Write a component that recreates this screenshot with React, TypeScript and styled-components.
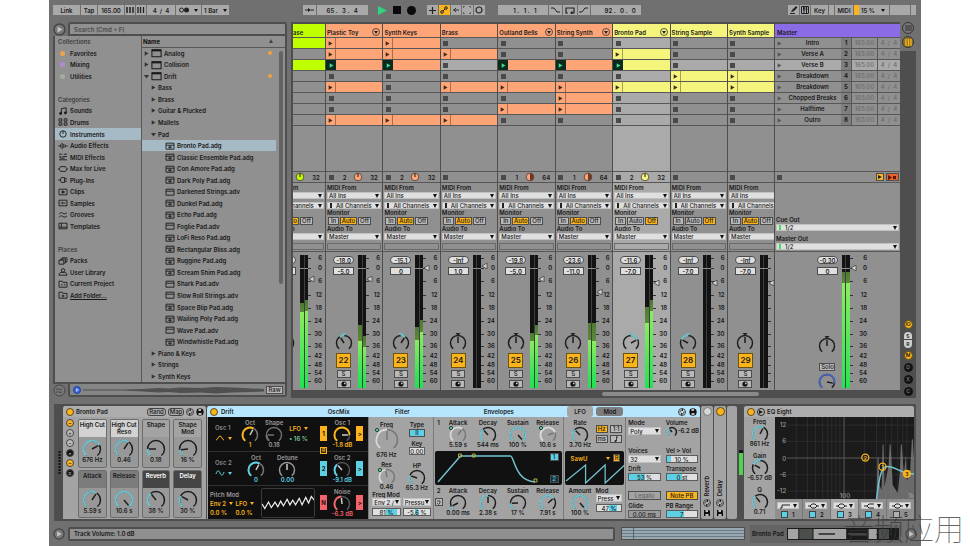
import React from 'react';
import styled, { createGlobalStyle, css } from 'styled-components';

/* ---------- palette ---------- */
const C = {
  chrome: '#6f706f',
  panel: '#909090',
  panelLit: '#aaaaaa',
  device: '#a3a3a3',
  gutter: '#4e4e4e',
  line: '#575757',
  ink: '#191919',
  control: '#a9a9a9',
  field: '#dfdfdf',
  orange: '#fda577',
  yellow: '#f5f57d',
  lime: '#bfff00',
  violet: '#8c6ce6',
  amber: '#fbb41b',
  cyan: '#5cd0e4',
  teal: '#6fc3cf',
  red: '#f4636b',
  sky: '#b5e6fd',
  pick: '#a5bac5',
};

const Global = createGlobalStyle`
  *, *::before, *::after { box-sizing: border-box; }
  body { margin: 0; background: #fff; }
  #root { font: 600 6px/7px Inter, "Liberation Sans", sans-serif; color: ${C.ink}; white-space: nowrap; }
  button, input, select { appearance: none; border: 0; border-radius: 0; margin: 0; padding: 0; min-width: 0;
    background: none; font: inherit; color: inherit; line-height: 7px; }
  button { cursor: pointer; }
  svg { display: block; flex: none; }
  a { color: inherit; }
  ul { list-style: none; margin: 0; padding: 0; }
`;

/* ---------- shell ---------- */
const Page = styled.div`
  position: relative; min-height: 100vh; padding: 0 49px; display: flex; flex-direction: column; overflow: hidden;
`;
const App_ = styled.main`
  flex: 1; min-width: 0; display: flex; flex-direction: column; background: ${C.chrome};
`;
const Watermark = styled.div`
  position: absolute; right: 6px; bottom: 2px; font: 100 30px/34px "Noto Sans CJK SC", sans-serif; color: #3a3a3acc;
`;

/* ---------- shared controls ---------- */
const Caption = styled.span<{ $c?: string; $center?: boolean }>`
  display: block; height: 7px; color: ${p => p.$c || 'inherit'}; text-align: ${p => (p.$center ? 'center' : 'left')};
`;

const SelectWrap = styled.span<{ $dark?: boolean; $h: number; $mark?: string }>`
  position: relative; display: flex; align-items: center; height: ${p => p.$h}px; background: ${C.field};
  box-shadow: inset 0 0 0 1px #0002;
  &::before { content: ''; display: ${p => (p.$mark ? 'block' : 'none')}; width: 2px; height: 5px; margin: 0 2px 0 3px; background: ${p => p.$mark}; }
  &::after { content: ''; position: absolute; right: 2px; top: 2px; border: 2px solid transparent; border-top: 4px solid #111; border-bottom: 0; pointer-events: none; }
  select { flex: 1; width: 100%; height: 100%; padding-left: 2px; font-weight: 500; }
`;
function Select({ label, value, h = 7, mark }: { label: string; value: string; h?: number; mark?: string }) {
  return (
    <SelectWrap $h={h} $mark={mark}>
      <select aria-label={label} defaultValue={value}><option>{value}</option></select>
    </SelectWrap>
  );
}

const ValueField = styled.input<{ $fill?: number; $from?: number; $round?: boolean; $dim?: boolean }>`
  display: block; width: 100%; height: 8px; text-align: center; border: 1px solid #5c5c5c; font-weight: 500; line-height: 6px;
  border-radius: ${p => (p.$round ? 4 : 0)}px;
  background: ${p => p.$dim ? '#9b9b9b' : `linear-gradient(to right, ${C.field} ${p.$from || 0}%, ${C.cyan} ${p.$from || 0}%, ${C.cyan} ${p.$fill || 0}%, ${C.field} ${p.$fill || 0}%)`};
`;

const Toggle = styled.button<{ $on?: boolean; $w?: number; $h?: number; $bg?: string; $c?: string }>`
  flex: none; width: ${p => (p.$w ? p.$w + 'px' : '100%')}; height: ${p => p.$h || 8}px; text-align: center; line-height: ${p => (p.$h || 8) - 2}px;
  border: 1px solid #4d4d4d; background: ${p => p.$bg || (p.$on ? C.amber : '#b9b9b9')}; color: ${p => p.$c || C.ink};
  display: flex; align-items: center; justify-content: center; font-weight: 500;
`;

const RoundBtn = styled.button<{ $s: number; $bg: string; $b?: string; $c?: string }>`
  flex: none; width: ${p => p.$s}px; height: ${p => p.$s}px; border-radius: 50%; background: ${p => p.$bg}; color: ${p => p.$c || C.ink};
  border: 1px solid ${p => p.$b || '#5b4a1c'}; display: flex; align-items: center; justify-content: center; font-size: 5px; line-height: 5px;
`;

/* ---------- dial ---------- */
const DialBox = styled.span`
  position: relative; display: block; flex: none;
  svg { overflow: visible; }
  input { position: absolute; inset: 0; width: 100%; height: 100%; opacity: 0; cursor: ns-resize; }
`;
const pt = (r: number, deg: number) => {
  const a = (deg * Math.PI) / 180;
  return `${(r * Math.sin(a)).toFixed(2)} ${(-r * Math.cos(a)).toFixed(2)}`;
};
const arc = (r: number, a: number, b: number) => `M${pt(r, a)}A${r} ${r} 0 ${b - a > 180 ? 1 : 0} 1 ${pt(r, b)}`;

type DialProps = { label: string; v: number; r?: number; c?: string; ring?: string; hand?: string; center?: boolean; arrow?: string; dot?: boolean };
function Dial({ label, v, r = 8, c = C.teal, ring = '#1d1d1d', hand = '#1d1d1d', center, arrow, dot }: DialProps) {
  const ang = -140 + 280 * v;
  const w = 2 * r + 2;
  const h = 2 * r - 1;
  const from = center ? Math.min(0, ang) : -140;
  const to = center ? Math.max(0, ang) : ang;
  const a = r - 0.5;
  return (
    <DialBox>
      <svg width={w} height={h} viewBox={`${-r - 1} ${-r - 1} ${w} ${h}`} fill="none">
        <path d={arc(a, -140, 140)} stroke={ring} strokeWidth="1.5" />
        {to - from > 1 && <path d={arc(a, from, to)} stroke={c} strokeWidth="1.9" />}
        <path d={`M0 0L${pt(r - 2, ang)}`} stroke={hand} strokeWidth="1.5" />
        {arrow && <path d={`M-2.5 ${-r - 2}h5L0 ${-r + 1}z`} fill={arrow} />}
        {dot && <circle cx={-r + 1} cy={-r + 1} r="1.6" fill="#7fc9a5" stroke="#0d4a38" strokeWidth="1" />}
      </svg>
      <input type="range" aria-label={label} min={0} max={1} step={0.01} defaultValue={v} />
    </DialBox>
  );
}
const StackBox = styled.div<{ $c?: string; $gap?: number }>`
  display: flex; flex-direction: column; align-items: center; min-width: 0;
  > :last-child { color: ${p => p.$c || 'inherit'}; margin-top: ${p => p.$gap || 0}px; }
`;
function DialStack({ label, value, textColor, gap, ...d }: DialProps & { value: string; textColor?: string; gap?: number }) {
  return (
    <StackBox $c={textColor} $gap={gap}>
      <Caption>{label}</Caption>
      <Dial label={label} {...d} />
      <Caption>{value}</Caption>
    </StackBox>
  );
}

/* ---------- icons on a 12 x 10 grid ---------- */
const glyph: Record<string, React.ReactNode> = {
  note: <><path d="M4 8V2l6-1v6" /><circle cx="3" cy="8" r="1.3" fill="currentColor" /><circle cx="9" cy="7.3" r="1.3" fill="currentColor" /></>,
  drums: <><path d="M1 1h3.500v3H1zM7.500 1H11v3H7.500zM1 6h3.500v3H1zM7.500 6H11v3H7.500z" /></>,
  dial: <><circle cx="6" cy="5" r="4" /><path d="M6 5V1" /></>,
  audio: <path d="M0 5h2M3 3v4M5 1v8M7 2.5v5M9 3.5v3M10 5h2" />,
  midi: <path d="M1 1.5h4M7 1.5h4M1 4.500h2M5 4.500h6M1 8.500h10M3 4.500v2h5" />,
  max: <path d="M3 2h6l2 3-2 3H3L1 5zM0 5h1M11 5h1" />,
  plug: <path d="M0 5h3M4 2h4v6H4C2.500 7 2.500 3 4 2zM8 3.500h3M8 6.500h3" />,
  clip: <><path d="M1 1.500h10v7H1z" /><path d="M5 3.500l3 1.500-3 1.500z" fill="currentColor" /></>,
  sample: <><path d="M1 1.500h10v7H1z" /><path d="M3 5h1M5 3.500v3M7 4v2M8 5h1.500" /></>,
  groove: <path d="M1 4c2-3 3-2 5-1s3 1 5-1M1 8c2-3 3-2 5-1s3 1 5-1" />,
  template: <path d="M1 1.500h10v7H1zM4 1.500v5M1 6.500h10" />,
  packs: <path d="M1 4h6v5H1zM3 4V2.500h6V7.500H7M5 2.500V1h6v5H9" />,
  user: <><circle cx="6" cy="3" r="2.200" /><path d="M1 9c0-3 2-3.500 3.500-3.500h3C9 5.500 11 6 11 9z" /></>,
  project: <path d="M1 9V1.500h4l1 1.500h5v6zM3.500 6h2M7 6h2" />,
  folder: <path d="M1 9V1.500h4l1 1.500h5v6zM6 4.500v3.500M4.200 6.200h3.600" />,
  device: <><path d="M1 1.500h10v7.500H1z" /><path d="M1 2.200h10" strokeWidth="2" /></>,
  rack: <><path d="M1 1.500h10v7.500H1zM1 4h10M6 4v5M3.500 6.500h5" /></>,
  preset: <path d="M1 1.500h10v7.500H1zM1 4h10" />,
};
function Icon({ n, w = 10 }: { n: string; w?: number }) {
  return <svg width={w} height={w === 10 ? 8 : 10} viewBox="0 0 12 10" fill="none" stroke="currentColor" strokeWidth="1.1">{glyph[n]}</svg>;
}
const Tri = ({ down, c = '#333' }: { down?: boolean; c?: string }) => (
  <svg width="5" height="5" viewBox="0 0 5 5"><path d={down ? 'M0 1h5L2.500 4.500z' : 'M.7.300L4.500 2.500.7 4.700z'} fill={c} /></svg>
);
const Caret = ({ c = '#111' }: { c?: string }) => <svg width="4" height="3" viewBox="0 0 4 3"><path d="M0 0h4L2 3z" fill={c} /></svg>;
const Swap = () => <svg width="6" height="6" viewBox="0 0 6 6" fill="none" stroke="currentColor" strokeWidth=".9"><path d="M1 3.500C1 2 2 1 3.500 1M5 2.500C5 4 4 5 2.500 5M3 0l1 1-1 1M3 4L2 5l1 1" /></svg>;
const Save = () => <svg width="6" height="6" viewBox="0 0 6 6"><path d="M0 0h5l1 1v5H0z" fill="#111" /><path d="M1.500 0h2.500v2H1.500zM1.500 4h3v2h-3z" fill="#bbb" /></svg>;
const PlayRing = ({ s = 13 }: { s?: number }) => (
  <svg width={s} height={s} viewBox="0 0 13 13"><circle cx="6.500" cy="6.500" r="5.500" fill="#777" stroke="#444" strokeWidth="1.400" /><path d="M4.500 3.500l5 3-5 3z" fill="#c4c4c4" /></svg>
);

/* ---------- toolbar ---------- */
const Bar = styled.header`
  display: flex; align-items: center; height: 22px; padding: 0 5px 2px 4px;
`;
const Group = styled.div<{ $ml?: number }>`display: flex; gap: 1px; align-items: center; margin-left: ${p => p.$ml || 0}px;`;
const Grow = styled.div<{ $n: number }>`flex: ${p => p.$n} 1 0;`;
const Tool = styled.button<{ $w: number; $on?: boolean; $clear?: boolean }>`
  width: ${p => p.$w}px; height: 10px; display: flex; align-items: center; justify-content: center; gap: 5px;
  background: ${p => (p.$clear ? 'none' : p.$on ? C.amber : C.control)};
`;
const Num = styled.input<{ $w: number }>`
  width: ${p => p.$w}px; height: 10px; background: ${C.control}; text-align: center; white-space: pre;
`;
const Cpu = styled.button`
  width: 35px; height: 10px; display: flex; align-items: center; justify-content: space-between; padding: 0 4px 0 7px;
  background: linear-gradient(to right, ${C.amber} 5px, ${C.control} 5px);
`;

function Toolbar() {
  return (
    <Bar>
      <Group>
        <Tool $w={27}>Link</Tool><Tool $w={16}>Tap</Tool><Num $w={26} aria-label="Tempo" defaultValue="165.00" />
        <Tool $w={10} aria-label="Nudge down"><svg width="8" height="6"><path d="M1 0v6M4 0v6M7 0v6" stroke="#222" strokeWidth="1.500" /></svg></Tool>
        <Tool $w={10} aria-label="Nudge up"><svg width="8" height="6"><path d="M1 0v6M3.500 0v6M6.500 0v6" stroke="#222" strokeWidth="1.300" /></svg></Tool>
        <Num $w={28} aria-label="Time signature" defaultValue="4  /  4" />
        <Tool $w={25} aria-label="Metronome"><svg width="10" height="6" viewBox="0 0 10 6"><circle cx="2.500" cy="3" r="2" fill="none" stroke="#222" /><circle cx="7.500" cy="3" r="2.500" fill="#222" /></svg><Caret /></Tool>
        <Tool $w={27}>1 Bar<Caret /></Tool>
      </Group>
      <Grow $n={1} />
      <Group>
        <Tool $w={13} aria-label="Follow"><svg width="9" height="6" viewBox="0 0 9 6"><path d="M0 3h4M6 3h3" stroke="#222" /><path d="M3 1l3 2-3 2z" fill="#222" /></svg></Tool>
        <Num $w={51} aria-label="Position" defaultValue="65 .   3 .   4" />
      </Group>
      <Group $ml={9}>
        <Tool $w={12} $clear aria-label="Play"><svg width="9" height="9" viewBox="0 0 9 9"><path d="M0 0l9 4.500L0 9z" fill="#2fd47c" /></svg></Tool>
        <Tool $w={14} $clear aria-label="Stop"><svg width="8" height="8"><rect width="8" height="8" fill="#0a0a0a" /></svg></Tool>
        <Tool $w={13} $clear aria-label="Record"><svg width="9" height="9"><circle cx="4.500" cy="4.500" r="4.500" fill="#0a0a0a" /></svg></Tool>
      </Group>
      <Group $ml={9}>
        <Tool $w={11} aria-label="Overdub"><svg width="7" height="7"><path d="M3.500 0v7M0 3.500h7" stroke="#222" strokeWidth="1.200" /></svg></Tool>
        <Tool $w={11} $on aria-label="Automation arm"><svg width="8" height="8" viewBox="0 0 8 8" fill="none" stroke="#222"><circle cx="2" cy="6" r="1.300" /><circle cx="6" cy="2" r="1.300" /><path d="M3 5l2-2" /></svg></Tool>
        <Tool $w={10} aria-label="Re-enable automation"><svg width="6" height="6" viewBox="0 0 6 6"><path d="M0 3h6M3 1L1 3l2 2" fill="none" stroke="#333" /></svg></Tool>
        <Tool $w={11} aria-label="Capture"><svg width="8" height="8" viewBox="0 0 8 8"><path d="M0 2V0h2M6 0h2v2M8 6v2H6M2 8H0V6" fill="none" stroke="#333" /></svg></Tool>
        <Tool $w={11} aria-label="Session record"><svg width="8" height="8" viewBox="0 0 8 8"><circle cx="4" cy="4" r="3" fill="none" stroke="#222" strokeWidth="1.200" /></svg></Tool>
      </Group>
      <Group $ml={13}>
        <Num $w={50} aria-label="Loop start" defaultValue="   1 .   1 .   1" />
        <Tool $w={13} aria-label="Punch in"><svg width="9" height="6"><path d="M0 1h3l3 4h3" fill="none" stroke="#222" /></svg></Tool>
        <Tool $w={14} aria-label="Loop"><svg width="10" height="7"><path d="M3 6H1V1h8v5H6M7.500 4.500L6 6l1.500 1.500" fill="none" stroke="#222" strokeWidth="1.200" /></svg></Tool>
        <Tool $w={12} aria-label="Punch out"><svg width="9" height="6"><path d="M0 5h3l3-4h3" fill="none" stroke="#222" /></svg></Tool>
        <Num $w={50} aria-label="Loop length" defaultValue="      92 .   0 .   0" />
      </Group>
      <Grow $n={2} />
      <Group>
        <Tool $w={11} aria-label="Draw mode"><svg width="8" height="8" viewBox="0 0 8 8"><path d="M0 7.500h5" stroke="#222" /><path d="M1 6l1-2 4-4 1.500 1.500-4 4z" fill="#222" /></svg></Tool>
        <Tool $w={10} aria-label="Computer MIDI keyboard"><svg width="8" height="8" viewBox="0 0 8 8"><path d="M.5.500h7v7h-7zM3 1v6M5.500 1v6" fill="none" stroke="#222" /><path d="M2 1h1.500v3.500H2zM4.700 1h1.500v3.500H4.700z" fill="#222" /></svg></Tool>
        <Tool $w={17}>Key</Tool><Tool $w={5} aria-label="Key in" /><Tool $w={18}>MIDI</Tool>
        <Cpu>15 %<Caret /></Cpu>
        <Tool $w={20} aria-label="Disk overload" /><Tool $w={5} aria-label="MIDI out" />
      </Group>
    </Bar>
  );
}

/* ---------- browser ---------- */
const Work = styled.div`flex: 1; min-height: 0; display: flex; padding: 0 5px 0 4px;`;
const Browser = styled.aside`
  width: 234px; flex: none; display: flex; flex-direction: column; padding-bottom: 5px; margin-right: 4px;
`;
const BrowserRow = styled.div`display: flex; align-items: center; gap: 2px;`;
const Search = styled.input`
  flex: 1; height: 14px; padding: 0 4px; background: ${C.panel}; border: 2px solid ${C.gutter}; border-radius: 3px 3px 0 0;
  &::placeholder { color: #4c4c4c; opacity: 1; }
`;
const Shelves = styled.div`
  flex: 1; display: grid; grid-template-columns: 86px minmax(0, 1fr); background: ${C.panel}; border: 2px solid ${C.gutter}; border-top: 0;
`;
const List = styled.ul`
  display: grid; grid-template-rows: repeat(30, minmax(0, 1fr)); min-width: 0;
`;
const Heading = styled.li`padding-left: 3px; display: flex; align-items: center; color: #3d3d3d;`;
const NameHead = styled(Heading)`
  color: #111; font-weight: 700; justify-content: space-between; padding: 0 12px 0 1px; border-bottom: 1px solid ${C.line};
`;
const Item = styled.button<{ $on?: boolean; $pad?: number }>`
  width: 100%; height: 100%; padding-left: ${p => p.$pad ?? 3}px; display: flex; align-items: center; gap: 2px; text-align: left;
  background: ${p => (p.$on ? C.pick : 'none')};
`;
const Folder = styled.a`height: 100%; padding-left: 3px; display: flex; align-items: center; gap: 2px;`;
const Swatch = styled.i<{ $c: string }>`width: 5px; height: 5px; margin: 0 3px 0 2px; border-radius: 50%; background: ${p => p.$c};`;
const Tag = styled.i`width: 4px; height: 4px; border-radius: 50%; background: #f0a43e; margin-left: auto; margin-right: 4px;`;
const Tree = styled.div`
  position: relative; display: grid; min-width: 0; border-left: 1px solid ${C.line};
  li:not(:first-child) { padding-right: 9px; }
`;
const Thumb = styled.i`position: absolute; right: 2px; top: 15px; width: 4px; height: 233px; border-radius: 2px; background: #636363;`;
const Preview = styled.div`
  flex: 1; height: 13px; padding: 0 2px 0 3px; display: flex; align-items: center; gap: 2px; background: #858585;
  border: 2px solid ${C.gutter}; border-top: 0; border-radius: 0 0 3px 3px;
  > svg { flex: 1; min-width: 0; }
`;

const categories: [string, string][] = [
  ['note', 'Sounds'], ['drums', 'Drums'], ['dial', 'Instruments'], ['audio', 'Audio Effects'], ['midi', 'MIDI Effects'], ['max', 'Max for Live'],
  ['plug', 'Plug-Ins'], ['clip', 'Clips'], ['sample', 'Samples'], ['groove', 'Grooves'], ['template', 'Templates'],
];
const presets = ['Bronto Pad.adg', 'Classic Ensemble Pad.adg', 'Con Amore Pad.adg', 'Dark Poly Pad.adg', 'Darkened Strings.adv', 'Dunkel Pad.adg',
  'Echo Pad.adg', 'Foglie Pad.adv', 'LoFi Reso Pad.adg', 'Rectangular Bliss.adg', 'Ruggine Pad.adg', 'Scream Shim Pad.adg', 'Shark Pad.adv',
  'Slow Roll Strings.adv', 'Space Blip Pad.adg', 'Wailing Poly Pad.adg', 'Wave Pad.adv', 'Windwhistle Pad.adg'];

function BrowserPane() {
  const sub = (t: string, open?: boolean) => <li key={t}><Item $pad={9}><Tri down={open} />{t}</Item></li>;
  const top = (t: string, open?: boolean, tag?: boolean) => <li key={t}><Item $pad={2}><Tri down={open} /><Icon n="device" w={11} />{t}{tag && <Tag />}</Item></li>;
  return (
    <Browser>
      <BrowserRow><PlayRing /><Search type="search" aria-label="Search" placeholder="Search (Cmd + F)" /></BrowserRow>
      <Shelves>
        <List>
          <Heading>Collections</Heading>
          <li><Item><Swatch $c="#f0a24d" />Favorites</Item></li>
          <li><Item><Swatch $c="#b48ad8" />Mixing</Item></li>
          <li><Item><Swatch $c="#a3ada0" />Utilities</Item></li>
          <li />
          <Heading>Categories</Heading>
          {categories.map(([i, t]) => <li key={t}><Item $on={t === 'Instruments'}><Icon n={i} />{t}</Item></li>)}
          <li />
          <Heading>Places</Heading>
          <li><Item><Icon n="packs" />Packs</Item></li>
          <li><Item><Icon n="user" />User Library</Item></li>
          <li><Item><Icon n="project" />Current Project</Item></li>
          <li><Folder href="#add"><Icon n="folder" />Add Folder...</Folder></li>
        </List>
        <Tree>
          <List>
            <NameHead>Name<svg width="4" height="4"><path d="M0 4h4L2 0z" fill="#444" /></svg></NameHead>
            {top('Analog', false, true)}{top('Collision')}{top('Drift', true, true)}
            {sub('Bass')}{sub('Brass')}{sub('Guitar & Plucked')}{sub('Mallets')}{sub('Pad', true)}
            {presets.map((t, i) => <li key={t}><Item $pad={23} $on={i === 0}><Icon n={t.endsWith('adv') ? 'preset' : 'rack'} />{t}</Item></li>)}
            {sub('Piano & Keys')}{sub('Strings')}{sub('Synth Keys')}
          </List>
          <Thumb />
        </Tree>
      </Shelves>
      <BrowserRow>
        <svg width="13" height="13" viewBox="0 0 13 13" fill="none" stroke="#444"><circle cx="6.500" cy="6.500" r="5.500" fill="#777" /><path d="M3 5.500c2-2 3 1 6-.500M3 8.500c2-2 3 1 6-.500" /></svg>
        <Preview>
          <RoundBtn $s={8} $bg="#3c63d8" $b="#2244a8" aria-label="Preview"><svg width="4" height="4"><path d="M1 0l3 2-3 2z" fill="#a9c0ff" /></svg></RoundBtn>
          <svg height="8" viewBox="0 0 180 8" preserveAspectRatio="none"><path d="M0 3.500h40l20-.5 15-1 10 .5 12-1 20 .5 15-1 16 .5 20 1 12 .5v2.500l-12 .5-20 .5-16 1-15-1-20 .5-12-1-10 .5-15-1-20-1H0z" fill="#505050" /></svg>
          <Toggle $w={17} $h={8}>Raw</Toggle>
        </Preview>
      </BrowserRow>
    </Browser>
  );
}

/* ---------- session ---------- */
const Session = styled.section`
  flex: 1; min-width: 0; display: flex; flex-direction: column; background: ${C.gutter}; padding-left: 2px; margin-bottom: 4px;
`;
const Tracks = styled.div`
  flex: 1; display: grid; gap: 1px; grid-template-columns: 32px repeat(7, minmax(0, 1fr)) 46px 125px; padding-top: 2px;
`;
const Column = styled.div<{ $lit?: boolean; $end?: boolean }>`
  min-width: 0; overflow: hidden; display: flex; justify-content: ${p => (p.$end ? 'flex-end' : 'flex-start')};
  background: ${p => (p.$lit ? C.panelLit : C.panel)};
`;
const Strip = styled.div<{ $fixed?: boolean }>`
  flex: ${p => (p.$fixed ? '0 0 57px' : '1')}; min-width: 0; display: flex; flex-direction: column;
`;
const TrackTitle = styled.div<{ $c: string; $pad?: number }>`
  height: 14px; padding: 3px 2px 0 ${p => p.$pad || 1}px; display: flex; align-items: center; justify-content: space-between;
  background: ${p => p.$c}; border-bottom: 1px solid ${C.line}; overflow: hidden;
`;
const Slots = styled.div`height: 88px; flex: none; display: grid; grid-template-rows: repeat(8, minmax(0, 1fr));`;
const Slot = styled.div<{ $c?: string; $lit?: boolean }>`
  display: flex; align-items: center; border-bottom: 1px solid ${C.line}; background: ${p => p.$c || (p.$lit ? C.panelLit : 'none')};
`;
const Launch = styled.button<{ $live?: boolean; $split?: boolean }>`
  width: 10px; height: 100%; display: flex; align-items: center; justify-content: center;
  background: ${p => (p.$live ? '#0b2a1e' : 'none')}; border-right: ${p => (p.$split ? '1px solid #0005' : '0')};
`;
const Idle = styled.div`flex: 1; border-bottom: 1px solid ${C.line};`;
const ClipStatus = styled.div`
  height: 11px; display: grid; grid-template-columns: 10px 17px 13px 16px; align-items: center; text-align: center; border-bottom: 1px solid ${C.line};
`;
const StopSquare = () => <svg width="5" height="5"><rect width="5" height="5" fill="#4a4a4a" /></svg>;

const Routing = styled.div`height: 69px; padding: 1px 1px 0 1px; display: flex; flex-direction: column; border-bottom: 1px solid ${C.line};
  > * { flex: none; }
`;
const Pad = styled.div<{ $h: number }>`height: ${p => p.$h}px;`;
const MonitorRow = styled.div`display: flex; gap: 1px; padding-left: 1px;`;
const Blank = styled.div`height: 7px; border: 1px solid #6a6a6a;`;

const Mixer = styled.div<{ $pad?: number }>`height: 138px; flex: none; display: flex; padding-left: ${p => p.$pad || 0}px; position: relative;`;
const Controls = styled.div`width: 32px; flex: none; padding: 4px 0 2px 3px; display: flex; flex-direction: column; align-items: center; gap: 2px;`;
const LevelField = styled.input<{ $round?: boolean }>`
  width: 21px; height: 8px; margin-bottom: 1px; text-align: center; background: ${C.field}; border: 1px solid #4c4c4c; border-radius: ${p => (p.$round ? 4 : 0)}px; line-height: 6px;
`;
const TrackNo = styled.button`width: 15px; height: 15px; background: ${C.amber}; border: 1px solid #6b5312; font-size: 8px; line-height: 13px; font-weight: 600;`;
const Meter = styled.div`
  position: relative; width: 8px; flex: none; margin: 3px 0 2px; display: flex; gap: 1px; background: #3f3f3f;
  input { position: absolute; inset: 0; width: 100%; height: 100%; opacity: 0; writing-mode: vertical-lr; direction: rtl; }
  &::after { content: ''; position: absolute; left: 0; right: 0; top: 13px; height: 1px; background: #8c8c8c; }
`;
const Led = styled.i<{ $g: number; $d: number }>`
  flex: 1; background: linear-gradient(to top, #1fe351 0, #35e456 10%, #8bec5f ${p => p.$g}%, #5a8a38 ${p => p.$g}%, #4e7a33 ${p => p.$d}%, #131313 ${p => p.$d}%);
  ${p => p.$g === 0 && css`background: #131313;`}
`;
const Scale = styled.div<{ $wide?: boolean }>`width: ${p => (p.$wide ? 17 : 14)}px;`;
const Mark = styled.div<{ $h: number }>`
  height: ${p => p.$h}px; display: flex; justify-content: space-between; align-items: flex-end; line-height: 8px;
  &::before { content: ''; width: 3px; height: 1px; margin-bottom: 3px; background: #333; }
`;
const FaderKnob = styled.svg<{ $y: number; $x: number }>`position: absolute; left: ${p => p.$x}px; top: ${p => p.$y}px;`;
const marks: [string, number][] = [['6', 10], ['0', 10], ['6', 13], ['12', 14], ['18', 13], ['24', 13], ['30', 13], ['36', 12], ['42', 10], ['48', 9], ['54', 8], ['60', 8]];

type Levels = [number, number, number, number];
function MeterAndScale({ lv, y, wide }: { lv: Levels; y: number; wide?: boolean }) {
  return (
    <>
      <Meter><Led $g={lv[0]} $d={lv[1]} /><Led $g={lv[2]} $d={lv[3]} /><input type="range" aria-label="Volume fader" /></Meter>
      <Scale $wide={wide}>{marks.map(([t, h], i) => <Mark key={i} $h={h}>{t}</Mark>)}</Scale>
      <FaderKnob $x={wide ? 76 : 41} $y={y - 3} width="6" height="6" viewBox="0 0 6 6"><path d="M0 3l5-3v6z" fill="#d4d4d4" stroke="#333" strokeWidth=".7" /></FaderKnob>
    </>
  );
}

type Track = {
  name: string; c: string; slots: string; menu?: boolean; bars?: [string, string]; pie?: number; mon: 'Auto' | 'Off';
  peak: string; vol: string; no: string; pan: number; lv: Levels; y: number; lit?: boolean; side?: 'l' | 'r';
};
/* slots: "c" holds a clip, "p" is playing, "-" is empty */
const tracks: Track[] = [
  { name: 'ase', c: C.lime, slots: 'c-p-----', bars: ['1', '32'], pie: 0, mon: 'Auto', peak: '-12.0', vol: '-5.0', no: '21', pan: 0.5, lv: [57, 64, 58, 66], y: 27, side: 'l' },
  { name: 'Plastic Toy', c: C.orange, slots: 'ccp-c--c', menu: true, bars: ['2', '32'], pie: 0, mon: 'Auto', peak: '-18.0', vol: '-5.0', no: '22', pan: 0.38, lv: [35, 47, 31, 39], y: 27 },
  { name: 'Synth Keys', c: C.orange, slots: 'ccp----c', bars: ['2', '32'], pie: 0, mon: 'Auto', peak: '-15.1', vol: '0', no: '23', pan: 0.62, lv: [36, 46, 42, 51], y: 16 },
  { name: 'Brass', c: C.orange, slots: '-c--c--c', mon: 'Auto', peak: '-Inf', vol: '1.0', no: '24', pan: 0.5, lv: [0, 0, 0, 0], y: 14 },
  { name: 'Outland Bells', c: C.orange, slots: '--p-c-c-', menu: true, bars: ['1', '64'], pie: 0.5, mon: 'Auto', peak: '-19.8', vol: '-5.0', no: '25', pan: 0.5, lv: [35, 41, 40, 47], y: 27 },
  { name: 'String Synth', c: C.orange, slots: '--p-ccc-', menu: true, bars: ['1', '64'], pie: 0.5, mon: 'Auto', peak: '-23.6', vol: '-11.0', no: '26', pan: 0.5, lv: [36, 49, 35, 49], y: 40 },
  { name: 'Bronto Pad', c: C.yellow, slots: '-cp-c---', menu: true, bars: ['2', '32'], pie: 0, mon: 'Off', peak: '-11.6', vol: '-7.0', no: '27', pan: 0.72, lv: [49, 61, 58, 66], y: 31, lit: true },
  { name: 'String Sample', c: C.yellow, slots: '---cc---', mon: 'Off', peak: '-Inf', vol: '-7.0', no: '28', pan: 0.28, lv: [0, 0, 0, 0], y: 31 },
  { name: 'Synth Sample', c: C.yellow, slots: '---cc---', mon: 'Auto', peak: '-Inf', vol: '-7.0', no: '29', pan: 0.5, lv: [0, 0, 0, 0], y: 31, side: 'r' },
];

function TrackColumn({ t }: { t: Track }) {
  const dark = t.pie === 0.5;
  return (
    <Column $lit={t.lit} $end={t.side === 'l'}>
      <Strip $fixed={!!t.side}>
        <TrackTitle $c={t.c} $pad={t.side === 'l' ? 25 : 1}>
          {t.name}
          {t.menu && <svg width="8" height="8" viewBox="0 0 8 8"><circle cx="4" cy="4" r="3.500" fill="none" stroke="#333" strokeWidth=".8" /><path d="M2 3h4L4 6z" fill="#222" /></svg>}
        </TrackTitle>
        <Slots>
          {t.slots.split('').map((s, i) => (
            <Slot key={i} $c={s === '-' ? undefined : t.c} $lit={i === 2}>
              <Launch $live={s === 'p'} $split={s === 'c'} aria-label={s === '-' ? 'Stop track' : 'Launch clip'}>
                {s === '-' ? <StopSquare /> : <Tri c={s === 'p' ? '#3fdc94' : '#3b2a1c'} />}
              </Launch>
            </Slot>
          ))}
        </Slots>
        <Idle />
        <ClipStatus>
          <Launch aria-label="Stop clips"><StopSquare /></Launch>
          {t.bars && <>
            <span>{t.bars[0]}</span>
            <svg width="10" height="10" viewBox="-5 -5 10 10"><circle r="3.800" fill={t.c} stroke="#4b3b33" strokeWidth=".8" />{dark ? <path d="M0-3.800a3.800 3.800 0 010 7.600z" fill="#6d3a28" /> : <path d="M0 0v-3.800" stroke="#333" strokeWidth="1.200" />}</svg>
            <span>{t.bars[1]}</span>
          </>}
        </ClipStatus>
        <Routing>
          <Caption>MIDI From</Caption><Pad $h={1} />
          <Select label="MIDI input" value="All Ins" /><Pad $h={3} />
          <Select label="MIDI channel" value="All Channels" mark="#222" />
          <Caption>Monitor</Caption><Pad $h={1} />
          <MonitorRow>
            <Toggle $w={11} $h={8}>In</Toggle><Toggle $w={17} $h={8} $on={t.mon === 'Auto'}>Auto</Toggle><Toggle $w={13} $h={8} $on={t.mon === 'Off'}>Off</Toggle>
          </MonitorRow>
          <Caption>Audio To</Caption><Pad $h={1} />
          <Select label="Audio output" value="Master" /><Pad $h={3} />
          <Blank />
        </Routing>
        <Mixer>
          <Controls>
            <LevelField $round readOnly aria-label="Peak" defaultValue={t.peak} />
            <LevelField aria-label="Volume" defaultValue={t.vol} />
            <Grow $n={1} />
            <Dial label="Pan" v={t.pan} center c={C.teal} arrow={t.pan === 0.5 ? '#222' : '#6fb6c6'} />
            <Pad $h={0} />
            <TrackNo>{t.no}</TrackNo>
            <Toggle $w={14} $h={8}>S</Toggle>
            <Toggle $w={14} $h={8} aria-label="Arm"><svg width="6" height="6" viewBox="0 0 6 6"><circle cx="3" cy="3" r="2.600" fill="#111" /><circle cx="3.800" cy="2.400" r=".9" fill="#ccc" /></svg></Toggle>
          </Controls>
          <MeterAndScale lv={t.lv} y={t.y} />
        </Mixer>
      </Strip>
    </Column>
  );
}

const Scene = styled.div<{ $lit?: boolean }>`
  display: grid; grid-template-columns: 9px minmax(0, 1fr) 10px 26px 23px; align-items: center; text-align: center;
  border-bottom: 1px solid ${C.line}; background: ${p => (p.$lit ? C.panelLit : 'none')};
  > * { height: 100%; line-height: 10px; }
`;
const SceneNo = styled.span`background: #7e7e7e; font-weight: 700;`;
const Faint = styled.span`color: #6c6c6c; border-left: 1px solid ${C.line}; font-weight: 500; white-space: pre;`;
const scenes = ['Intro', 'Verse A', 'Verse B', 'Breakdown', 'Breakdown', 'Chopped Breaks', 'Halftime', 'Outro'];
const MasterStatus = styled.div`height: 11px; display: flex; align-items: center; gap: 2px; padding: 0 1px 0 0; border-bottom: 1px solid ${C.line};`;

function MasterColumn() {
  return (
    <Column>
      <Strip>
        <TrackTitle $c={C.violet} $pad={2}>Master</TrackTitle>
        <Slots>
          {scenes.map((s, i) => (
            <Scene key={i} $lit={i === 2}>
              <Launch aria-label="Launch scene"><Tri c="#555" /></Launch>
              <span>{s}</span><SceneNo>{i + 1}</SceneNo><Faint>165.00</Faint><Faint>4  /  4</Faint>
            </Scene>
          ))}
        </Slots>
        <Idle />
        <MasterStatus>
          <Launch aria-label="Stop all clips"><StopSquare /></Launch><Grow $n={1} />
          <Toggle $w={8} $h={8} $on aria-label="Back to arrangement"><svg width="4" height="4"><path d="M0 0l4 2-4 2z" fill="#222" /></svg></Toggle>
          <Toggle $w={13} $h={8} $bg="#e8622c" aria-label="Arrangement playing"><svg width="9" height="5" viewBox="0 0 9 5"><path d="M0 0l4 2.500L0 5zM5 1h3v3H5z" fill="#5a1408" /></svg></Toggle>
        </MasterStatus>
        <Routing>
          <Pad $h={32} /><Caption>Cue Out</Caption><Pad $h={1} /><Select label="Cue Out" value="1/2" mark="#3fe05a" />
          <Pad $h={4} /><Caption>Master Out</Caption><Pad $h={1} /><Select label="Master Out" value="1/2" mark="#3fe05a" />
        </Routing>
        <Mixer $pad={35}>
          <Controls>
            <LevelField $round readOnly aria-label="Peak" defaultValue="-0.30" />
            <LevelField aria-label="Master volume" defaultValue="0" />
            <Grow $n={1} />
            <Dial label="Pan" v={0.5} center arrow="#222" />
            <Pad $h={7} />
            <Toggle $w={16} $h={8}>Solo</Toggle>
            <Dial label="Cue volume" v={0.86} c="#4766b8" />
          </Controls>
          <MeterAndScale wide lv={[79, 87, 79, 87]} y={16} />
        </Mixer>
      </Strip>
    </Column>
  );
}

const ScrollTrack = styled.div`height: 8px; flex: none; display: flex; align-items: center; padding: 0 141px 0 309px;
  &::before { content: ''; flex: 1; height: 4px; border-radius: 2px; background: #8a8a8a; }
`;
const Rail = styled.nav`
  width: 16px; flex: none; display: flex; flex-direction: column; align-items: center; gap: 3px; background: ${C.gutter}; padding-bottom: 2px; margin-bottom: 4px;
`;
const RailTop = styled.div`width: 100%; display: flex; flex-direction: column; align-items: center; gap: 2px; padding-bottom: 3px; background: ${C.chrome};`;
const PillPair = styled.button`
  width: 8px; height: 16px; border-radius: 4px; font-size: 5px; line-height: 8px; display: flex; flex-direction: column; align-items: center;
  background: linear-gradient(#cfcfcf 7px, #444 7px, #444 8px, #cfcfcf 8px);
`;

/* ---------- devices ---------- */
const Devices = styled.section`
  height: 117px; flex: none; margin: 2px 5px 0; padding: 2px; display: flex; background: ${C.gutter};
`;
const Edge = styled.div`width: 7px; flex: none; display: flex; align-items: center; justify-content: center;`;
const Device = styled.article<{ $w?: number; $ml?: number }>`
  flex: ${p => (p.$w ? `0 0 ${p.$w}px` : '1')}; min-width: 0; margin-left: ${p => p.$ml || 0}px; display: flex; flex-direction: column; background: ${C.device};
  border-radius: 3px 3px 0 0; overflow: hidden;
`;
const DeviceTitle = styled.div`height: 11px; flex: none; display: flex; align-items: center; gap: 2px; padding: 0 2px 0 3px; background: #adadad;`;
const Chip = styled.button<{ $w: number }>`width: ${p => p.$w}px; height: 8px; line-height: 6px; border: 1px solid #444; border-radius: 3px; font-weight: 500;`;
const RackBody = styled.div`flex: 1; display: flex; padding: 2px 4px 1px 2px; gap: 3px;`;
const SideIcons = styled.div`width: 10px; display: flex; flex-direction: column; align-items: center; gap: 2px;`;
const Macros = styled.div`flex: 1; display: grid; grid-template-columns: repeat(4, minmax(0, 1fr)); grid-template-rows: 1fr 1fr; gap: 2px 3px;`;
const Macro = styled.div`border: 1px solid #6c6c6c; border-radius: 2px; background: #989898; display: flex; flex-direction: column; align-items: center; overflow: hidden;`;
const MacroName = styled.div<{ $bg: string; $c?: string }>`
  width: 100%; height: 17px; padding-top: 1px; margin-bottom: 2px; text-align: center; white-space: normal; background: ${p => p.$bg}; color: ${p => p.$c || 'inherit'};
`;
const macros: [string, string, number, string, string?][] = [
  ['High Cut', '676 Hz', 0.72, '#d2d2d2'], ['High Cut Reso', '0.46', 0.62, '#d2d2d2'], ['Shape', '0.18', 0.18, '#a3a3a3'], ['Shape Mod', '16 %', 0.16, '#a3a3a3'],
  ['Attack', '5.59 s', 0.62, '#7c7c7c'], ['Release', '10.6 s', 1, '#7c7c7c'], ['Reverb', '38 %', 0.36, '#454545', '#fff'], ['Delay', '30 %', 0.28, '#454545', '#fff'],
];

function Rack() {
  const side: [string, string][] = [[C.amber, '~'], ['#bdbdbd', '+'], ['#bdbdbd', '−'], ['#151515', '•'], [C.amber, '~'], ['#151515', '≡']];
  return (
    <Device $w={143}>
      <DeviceTitle>
        <RoundBtn $s={8} $bg={C.amber} aria-label="Device on" /><span>Bronto Pad</span><Grow $n={1} />
        <Chip $w={19}>Rand</Chip><Chip $w={16}>Map</Chip>
        <RoundBtn $s={8} $bg="#b5b5b5" $b="#444" aria-label="Swap"><Swap /></RoundBtn><RoundBtn $s={8} $bg="#b5b5b5" $b="#444" aria-label="Save"><Save /></RoundBtn>
      </DeviceTitle>
      <RackBody>
        <SideIcons>{side.map(([bg, t], i) => <RoundBtn key={i} $s={8} $bg={bg} $b="#444" $c={bg === '#151515' ? '#ccc' : '#222'}>{t}</RoundBtn>)}</SideIcons>
        <Macros>
          {macros.map(([n, val, v, bg, c]) => (
            <Macro key={n}><MacroName $bg={bg} $c={c}>{n}</MacroName><Dial label={n} v={v} r={9} /><Caption>{val}</Caption></Macro>
          ))}
        </Macros>
      </RackBody>
    </Device>
  );
}

const driftCols = css`display: grid; grid-template-columns: 164fr 64fr 130fr 63fr 74fr;`;
const DriftHead = styled.div`
  ${driftCols} height: 11px; flex: none; background: ${C.sky}; align-items: center;
`;
const HeadCell = styled.div<{ $j?: string }>`display: flex; align-items: center; justify-content: ${p => p.$j || 'center'}; gap: 3px; padding: 0 3px;`;
const Tab = styled.button<{ $on?: boolean }>`
  flex: 1; height: ${p => (p.$on ? 11 : 9)}px; border-radius: 3px; background: ${p => (p.$on ? C.device : '#7d7d7d')};
`;
const DriftBody = styled.div`${driftCols} flex: 1; > * { min-width: 0; border-right: 1px solid #7b7b7b; } > *:last-child { border-right: 0; }`;
const Osc = styled.div`background: #101010; color: #9a9a9a; display: grid; grid-template-columns: minmax(0, 112fr) minmax(0, 51fr); margin: 0 1px 0 1px;`;
const OscRows = styled.div`position: relative; display: grid; grid-template-rows: 34px 34px 34px; > div + div { border-top: 1px solid #303030; }`;
const Retrig = styled.button`
  position: absolute; left: 2px; top: 30px; width: 7px; height: 7px; border: 1px solid ${C.amber}; background: #3a2b08; color: ${C.amber}; font-size: 5px; line-height: 5px;
`;
const OscRow = styled.div`display: flex; align-items: flex-start; padding: 2px 2px 0 7px; gap: 6px;`;
const OscName = styled.div<{ $c: string }>`width: 20px; padding-top: 5px; color: #8b8b8b; > svg { margin-top: 4px; }`;
const Lines = styled.div<{ $c: string; $w?: number; $gap?: number; $pt?: number }>`
  color: ${p => p.$c}; width: ${p => p.$w || 24}px; padding-top: ${p => p.$pt || 0}px; display: flex; flex-direction: column; gap: ${p => p.$gap || 3}px;
`;
const Inline = styled.span`display: flex; align-items: center; gap: 3px;`;
const MixRow = styled.div`display: grid; grid-template-columns: 8px minmax(0, 1fr) 8px; align-items: start; padding: 2px 4px 0 2px;`;
const SideKey = styled.button<{ $c: string }>`height: 15px; margin-top: 7px; width: 7px; background: ${p => p.$c}; color: #1d1608; font-weight: 700;`;
const PitchRow = styled.div`display: grid; grid-template-columns: 51px minmax(0, 1fr); padding: 2px 3px 2px 2px; > svg { width: 100%; border: 1px solid #3a3a3a; border-radius: 2px; }`;
const PitchText = styled.div`padding-top: 3px; display: grid; grid-template-columns: 1fr 1fr; row-gap: 2px; color: ${C.amber}; align-content: start;
  > :first-child { grid-column: 1 / 3; color: #9a9a9a; }
`;
const Filter = styled.div`padding: 4px 2px 0; display: grid; grid-template-columns: minmax(0, 1fr) minmax(0, 1fr); column-gap: 2px; align-content: start;`;
const Cell = styled.div<{ $gap?: number; $px?: number }>`min-width: 0; display: flex; flex-direction: column; align-items: stretch; gap: ${p => p.$gap || 0}px; padding: 0 ${p => p.$px || 0}px;`;
const Env = styled.div`display: grid; grid-template-rows: 34px 34px 34px; min-width: 0;`;
const EnvRow = styled.div`padding-top: 2px; display: grid; grid-template-columns: 9px repeat(4, minmax(0, 1fr)); justify-items: center;`;
const Screen = styled.div`background: #111; margin: 0 1px; border-radius: 2px; overflow: hidden; min-width: 0; position: relative; > svg { width: 100%; height: 34px; }`;
const LfoRow = styled.div`padding: 2px 3px 0 1px; display: grid; grid-template-columns: 31px minmax(0, 1fr);`;
const RateKeys = styled.div`display: grid; grid-template-columns: 1fr 1fr; gap: 2px; padding-top: 6px; align-content: start;`;
const ModeGrid = styled.div`display: grid; grid-template-columns: 1fr 1fr; align-content: start; padding: 2px 2px 0 2px; column-gap: 5px; grid-template-rows: 28px 18px 26px 11px 16px;
  > * { min-width: 0; }`;
const VolumeRow = styled.div`display: flex; align-items: center;`;
const ScreenLabel = styled.div`position: absolute; left: 6px; right: 4px; top: 3px; display: flex; gap: 3px; align-items: center; color: ${C.amber};`;
const EnvKeys = styled.div`position: absolute; right: 3px; top: 2px; bottom: 2px; display: flex; flex-direction: column; justify-content: space-between;`;

const Labeled = ({ t, children }: { t: string; children: React.ReactNode }) => <Cell><Caption>{t}</Caption><Pad $h={1} />{children}</Cell>;

function Drift() {
  const grey = { ring: '#707070', c: '#707070', hand: '#707070' };
  const mix = (k: string, name: string, val: string, v: number, c: string) => (
    <MixRow>
      <SideKey $c={c}>{k}</SideKey>
      <DialStack label={name} value={val} v={v} c={c} ring="#555" hand="#c8c8c8" textColor={c} />
      <SideKey $c={c} aria-label={`${name} to filter`}>&gt;</SideKey>
    </MixRow>
  );
  return (
    <Device $ml={1}>
      <DriftHead>
        <HeadCell $j="flex-start"><RoundBtn $s={8} $bg={C.amber} aria-label="Drift on" /><span>Drift</span><Grow $n={6} /><span>OscMix</span><Grow $n={1} /></HeadCell>
        <HeadCell>Filter</HeadCell><HeadCell>Envelopes</HeadCell>
        <HeadCell $j="stretch"><Tab $on>LFO</Tab><Tab>Mod</Tab></HeadCell>
        <HeadCell $j="flex-end"><RoundBtn $s={8} $bg="#c7dfe9" $b="#444" aria-label="Swap"><Swap /></RoundBtn><RoundBtn $s={8} $bg="#c7dfe9" $b="#444" aria-label="Save"><Save /></RoundBtn></HeadCell>
      </DriftHead>
      <DriftBody>
        <Osc>
          <OscRows>
            <OscRow>
              <OscName $c={C.amber}><Caption>Osc 1</Caption><svg width="18" height="6" viewBox="0 0 18 6"><path d="M1 5C3 5 3 1 5 1s2 4 4 4" fill="none" stroke={C.amber} /><path d="M13 2h4l-2 3z" fill={C.amber} /></svg></OscName>
              <DialStack label="Oct" value="1" v={0.6} c={C.amber} ring="#777" hand="#ccc" textColor={C.amber} />
              <DialStack label="Shape" value="0.18" v={0.18} {...grey} />
              <Lines $c={C.amber} $pt={6} $gap={3}><Inline>LFO <Caret c={C.amber} /></Inline><Caption $c="#7ec99a">• 16 %</Caption></Lines>
            </OscRow>
            <OscRow>
              <OscName $c={C.cyan}><Caption>Osc 2</Caption><svg width="18" height="6" viewBox="0 0 18 6"><path d="M1 4c1-4 3-4 4-1s3 3 4-1" fill="none" stroke={C.cyan} /><path d="M13 2h4l-2 3z" fill={C.cyan} /></svg></OscName>
              <Pad $h={0} />
              <DialStack label="Oct" value="0" v={0.6} c={C.cyan} ring="#777" hand="#ccc" textColor={C.cyan} />
              <Pad $h={0} />
              <DialStack label="Detune" value="0.00" v={0.5} center c={C.cyan} ring="#999" hand="#ccc" textColor={C.cyan} />
            </OscRow>
            <PitchRow>
              <PitchText><Caption>Pitch Mod</Caption><Inline>Env 2<Caret c={C.amber} /></Inline><Inline>LFO<Caret c={C.amber} /></Inline><Caption>0.0 %</Caption><Caption>0.0 %</Caption></PitchText>
              <svg height="30" viewBox="0 0 56 30" preserveAspectRatio="none"><path d="M0 16l3 5 4-7 3 6 4-6 3 5 3-6 3 5 4-7 3 6 3-5 3 5 4-7 3 7 4-8 3 6 3-7 3 4" fill="none" stroke="#ececec" strokeWidth="1.300" /></svg>
            </PitchRow>
          </OscRows>
          <OscRows>
            {mix('1', 'Osc 1', '-1.8 dB', 0.82, C.amber)}
            {mix('2', 'Osc 2', '-9.1 dB', 0.35, C.cyan)}
            {mix('N', 'Noise', '-6.3 dB', 0.48, C.red)}
            <Retrig>R</Retrig>
          </OscRows>
        </Osc>
        <Filter>
          <Cell $gap={3}>
            <DialStack label="Freq" value="676 Hz" v={0.5} r={11} ring="#777" c="#d9d9d9" hand="#777" gap={2} dot />
            <DialStack label="Res" value="0.46" v={0.46} ring="#777" c="#d9d9d9" hand="#777" dot />
          </Cell>
          <Cell $gap={3}>
            <Cell $px={6}><Caption $center>Type</Caption><Pad $h={1} /><Toggle $bg={C.cyan} aria-label="Filter type">II</Toggle><Pad $h={3} />
              <Caption $center>Key</Caption><ValueField aria-label="Key" defaultValue="0.00" /><Pad $h={4} /></Cell>
            <DialStack label="HP" value="65.3 Hz" v={0.25} />
          </Cell>
          <Caption>Freq Mod</Caption><span />
          <Select label="Freq mod source 1" value="Env 2 /" h={8} /><Select label="Freq mod source 2" value="Pressu" h={8} />
          <Pad $h={2} /><Pad $h={2} />
          <ValueField aria-label="Freq mod amount 1" defaultValue="81 %" $from={50} $fill={90} /><ValueField aria-label="Freq mod amount 2" defaultValue="-5.6 %" $from={44} $fill={54} />
        </Filter>
        <Env>
          <EnvRow>
            <Caption>1</Caption>
            <DialStack label="Attack" value="5.59 s" v={0.62} ring="#777" c="#d9d9d9" hand="#777" dot />
            <DialStack label="Decay" value="544 ms" v={0.35} />
            <DialStack label="Sustain" value="100 %" v={1} />
            <DialStack label="Release" value="10.6 s" v={0.75} ring="#777" c="#d9d9d9" hand="#777" dot />
          </EnvRow>
          <Screen>
            <svg viewBox="0 0 129 34" preserveAspectRatio="none"><path d="M3 31L26 5h51c4 0 4 25 25 26" fill="none" stroke={C.teal} strokeWidth="1.500" /><path d="M24 3h3v3h-3zM38 3h3v3h-3zM101 28h3v3h-3z" fill="none" stroke="#b9b04a" /></svg>
            <EnvKeys><Toggle $w={9} $h={8} $bg={C.cyan}>1</Toggle><Toggle $w={9} $h={8} $bg="#17343c" $c={C.cyan}>2</Toggle></EnvKeys>
          </Screen>
          <EnvRow>
            <Lines $c="inherit" $w={8} $gap={4}><Caption $center>2</Caption><Toggle $w={8} $h={8} aria-label="Cycle"><svg width="5" height="5" viewBox="0 0 5 5"><path d="M1 1h3v2L2.500 4.500 1 3" fill="none" stroke="#222" strokeWidth=".8" /></svg></Toggle></Lines>
            <DialStack label="Attack" value="0.00 ms" v={0.08} />
            <DialStack label="Decay" value="2.38 s" v={0.5} />
            <DialStack label="Sustain" value="17 %" v={0.17} />
            <DialStack label="Release" value="7.91 s" v={0.68} />
          </EnvRow>
        </Env>
        <Env>
          <LfoRow>
            <DialStack label="Rate" value="3.70 Hz" v={0.34} />
            <RateKeys><Toggle $on>Hz</Toggle><Toggle>1:1</Toggle><Toggle>ms</Toggle><Toggle aria-label="Synced note"><svg width="4" height="6"><path d="M2.500 5V.500l1.500 1" fill="none" stroke="#222" strokeWidth=".8" /><circle cx="1.500" cy="5" r="1" fill="#222" /></svg></Toggle></RateKeys>
          </LfoRow>
          <Screen>
            <svg viewBox="0 0 61 34" preserveAspectRatio="none"><path d="M1 30L21 14v18L41 14v18L61 14" fill="none" stroke={C.teal} strokeWidth="1.300" /></svg>
            <ScreenLabel>SawU<Grow $n={1} /><Caret c={C.amber} /><Toggle $w={7} $h={8} $on>R</Toggle></ScreenLabel>
          </Screen>
          <LfoRow>
            <DialStack label="Amount" value="100 %" v={1} />
            <Cell><Caption>Mod</Caption><Select label="LFO mod source" value="Press" h={8} /><Pad $h={2} /><ValueField aria-label="LFO mod amount" defaultValue="47 %" $from={50} $fill={84} /></Cell>
          </LfoRow>
        </Env>
        <ModeGrid>
          <Labeled t="Mode"><Select label="Mode" value="Poly" h={8} /></Labeled>
          <Cell><Caption>Volume</Caption><VolumeRow><Dial label="Volume" v={0.36} r={5} /><span>-6.2 dB</span></VolumeRow></Cell>
          <Labeled t="Voices"><Select label="Voices" value="32" h={8} /></Labeled>
          <Labeled t="Vel &gt; Vol"><ValueField aria-label="Velocity to volume" defaultValue="10 %" $fill={12} /></Labeled>
          <Labeled t="Drift"><ValueField aria-label="Drift" defaultValue="53 %" $fill={53} /></Labeled>
          <Labeled t="Transpose"><ValueField aria-label="Transpose" defaultValue="0 st" $from={0} $fill={50} /></Labeled>
          <Toggle $h={9} $bg="#a3a3a3" $c="#666">Legato</Toggle><Toggle $h={9} $on>Note PB</Toggle>
          <Labeled t="Glide"><ValueField aria-label="Glide" defaultValue="0.00 ms" $dim /></Labeled>
          <Labeled t="PB Range"><ValueField aria-label="PB Range" defaultValue="7" $fill={58} /></Labeled>
        </ModeGrid>
      </DriftBody>
    </Device>
  );
}

const Folded = styled.article<{ $w: number }>`
  width: ${p => p.$w}px; flex: none; margin-left: 1px; background: ${C.device}; border-radius: 2px; display: flex; flex-direction: column; align-items: center; gap: 3px; padding: 1px 0 3px;
`;
const Vertical = styled.span`writing-mode: vertical-rl; transform: rotate(180deg); line-height: 8px;`;
const EqBody = styled.div`flex: 1; display: grid; grid-template-columns: 31px minmax(0, 1fr); min-height: 0;`;
const EqKnobs = styled.div`display: flex; flex-direction: column; padding-top: 1px; gap: 5px;`;
const EqMain = styled.div`min-width: 0; display: flex; flex-direction: column; overflow: hidden;`;
const EqGraph = styled.svg`width: 100%; height: 82px; background: #1b1b1b; font-size: 6px;`;
const Bands = styled.div`flex: 1; display: flex; background: #8f8f8f;`;
const Band = styled.label<{ $on?: boolean }>`
  flex: 0 0 28px; padding: 3px 3px 0 2px; border-right: 1px solid #777; background: ${p => (p.$on ? '#aaa' : 'none')};
`;
const Tick = styled.input`width: 7px; height: 7px; border: 1px solid #444; background: #b0b0b0; &:checked { background: ${C.cyan}; }`;
const TickRow = styled.span`display: flex; align-items: center; gap: 4px; padding: 2px 0 0 4px;`;
const ShapeWrap = styled(SelectWrap)`> svg { position: absolute; left: 3px; top: 1px; } select { color: transparent; }`;
const shapes = ['M0 5h2V2h8', 'M0 3h2l2-2h3l2 2-2 2H4L2 3M9 3h2', 'M0 3h2l2-2h3l2 2-2 2H4L2 3M9 3h2', 'M0 3h3l2-2h5M3 3l2 2h5', 'M0 3h2l2-2h3l2 2-2 2H4L2 3M9 3h2'];

function EqEight() {
  return (
    <Device $w={170}>
      <DeviceTitle><RoundBtn $s={8} $bg={C.amber} aria-label="EQ on" /><RoundBtn $s={8} $bg="#b5b5b5" $b="#222" aria-label="Show"><svg width="4" height="4"><path d="M0 0l4 2-4 2z" fill="#111" /></svg></RoundBtn><span>EQ Eight</span></DeviceTitle>
      <EqBody>
        <EqKnobs>
          <DialStack label="Freq" value="861 Hz" v={0.6} />
          <DialStack label="Gain" value="-6.57 dB" v={0.28} center arrow="#6fb6c6" />
          <DialStack label="Q" value="0.71" v={0.36} />
        </EqKnobs>
        <EqMain>
          <EqGraph viewBox="0 0 137 82" preserveAspectRatio="xMinYMin slice">
            <path d="M12 8H137M12 24H137M12 57H137M12 73H137M21 0V82M32 0V82M40 0V82M47 0V82M52 0V82M56 0V82M60 0V82M64 0V82M88 0V82M100 0V82M109 0V82M115 0V82M121 0V82M126 0V82M130 0V82" stroke="#333" strokeWidth=".7" />
            <path d="M12 40.500H137M68 0V82" stroke="#5a5a5a" />
            <path d="M100 82l1-40 1-3 1 28 2 5 1-45 1 0 1 42 4-22 1-20 1 0 2 40 5 8 2-20 1-28 1 0 2 30 2-20 1 26 3-8 2-34 1 2 2 38v22z" fill="#8b8b8b" opacity=".7" />
            <path d="M100 82c2-18 4-31 9-33 8-2 16 8 28 7" fill="none" stroke={C.teal} strokeWidth="1.500" />
            <circle cx="89" cy="40" r="3.500" fill="none" stroke={C.amber} strokeWidth="1.200" /><circle cx="106" cy="49" r="3.500" fill="none" stroke={C.amber} strokeWidth="1.200" />
            <circle cx="130" cy="56" r="4" fill={C.amber} />
            <g fill="#9c9c9c" textAnchor="end" fontWeight="500"><text x="11" y="10">12</text><text x="11" y="26">6</text><text x="11" y="43">0</text><text x="11" y="59">-6</text><text x="11" y="75">-12</text><text x="74" y="80">100</text><text x="137" y="80">1k</text></g>
            <g fill={C.amber} fontSize="5" textAnchor="middle"><text x="89" y="42">2</text><text x="106" y="51">1</text><text x="130" y="58" fill="#222">3</text></g>
          </EqGraph>
          <Bands>
            {shapes.map((d, i) => (
              <Band key={i} $on={i === 2}>
                <ShapeWrap $h={7}><select aria-label={`Band ${i + 1} shape`} defaultValue=""><option value=""></option></select><svg width="11" height="6" fill="none" stroke="#222"><path d={d} /></svg></ShapeWrap>
                <TickRow><Tick type="checkbox" defaultChecked={i < 4} />{i + 1}</TickRow>
              </Band>
            ))}
          </Bands>
        </EqMain>
      </EqBody>
    </Device>
  );
}

/* ---------- footer ---------- */
const Footer = styled.footer`height: 25px; flex: none; display: flex; align-items: center; padding: 0 4px;`;
const Status = styled.output`flex: 1; height: 14px; line-height: 10px; margin: 0 6px 0 3px; padding: 0 4px; background: #8f8f8f; border: 2px solid ${C.gutter}; border-radius: 2px;`;
const Overview = styled.div`width: 124px; height: 13px; border: 1px solid ${C.gutter};
  background: linear-gradient(to right, transparent 11px, #55646c 11px, #55646c 12px, transparent 12px), repeating-linear-gradient(#98a9b3 0 2px, #6d7a82 2px 3px);`;
const Chain = styled.div`width: 151px; height: 18px; margin-left: 5px; margin-right: 4px; padding: 0 2px; display: flex; align-items: center; gap: 3px; background: #646464;
  svg { flex: 1; height: 12px; min-width: 0; }`;
const ChainName = styled.span`color: #161616;`;

export default function App() {
  return (
    <>
      <Global />
      <Page>
        <App_>
          <Toolbar />
          <Work>
            <BrowserPane />
            <Session>
              <Tracks>{tracks.map(t => <TrackColumn key={t.name} t={t} />)}<MasterColumn /></Tracks>
              <ScrollTrack />
            </Session>
            <Rail>
              <RailTop>
                <RoundBtn $s={12} $bg="#777" $b="#333" aria-label="Arrangement view"><svg width="7" height="6"><path d="M0 1h7M0 3h7M0 5h7" stroke="#333" /></svg></RoundBtn>
                <RoundBtn $s={12} $bg="#8d7426" $b="#333" aria-label="Session view"><svg width="7" height="7"><path d="M1 0v7M3.500 0v7M6 0v7" stroke={C.amber} strokeWidth="1.300" /></svg></RoundBtn>
              </RailTop>
              <Grow $n={1} />
              <RoundBtn $s={9} $bg={C.amber}>IO</RoundBtn>
              <PillPair aria-label="Sends and returns"><span>S</span><span>R</span></PillPair>
              <RoundBtn $s={9} $bg={C.amber}>M</RoundBtn>
              <RoundBtn $s={9} $bg="#151515" $b="#111" $c="#777">D</RoundBtn>
              <RoundBtn $s={9} $bg="#151515" $b="#111" $c="#777">X</RoundBtn>
              <RoundBtn $s={9} $bg="#151515" $b="#111" $c="#777">C</RoundBtn>
            </Rail>
          </Work>
          <Devices>
            <Edge><svg width="3" height="24"><path d="M1.500 0v24" stroke="#111" strokeWidth="2" strokeDasharray="2 1" /></svg></Edge>
            <Rack />
            <Drift />
            <Folded $w={12}><RoundBtn $s={9} $bg="#d6d6d6" $b="#777" aria-label="Reverb on" /><Grow $n={1} /><Vertical>Reverb</Vertical><RoundBtn $s={8} $bg="#b5b5b5" $b="#444" aria-label="Swap"><Swap /></RoundBtn><Save /></Folded>
            <Folded $w={12}><RoundBtn $s={9} $bg={C.amber} aria-label="Delay on" /><Grow $n={1} /><Vertical>Delay</Vertical><RoundBtn $s={8} $bg="#b5b5b5" $b="#444" aria-label="Swap"><Swap /></RoundBtn><Save /></Folded>
            <Folded $w={10} />
            <Edge><svg width="4" height="25"><path d="M0 0h4v3H0z" fill="#151515" /><path d="M0 3h4v22H0z" fill="#4fd34a" /></svg></Edge>
            <EqEight />
          </Devices>
          <Footer>
            <PlayRing s={12} />
            <Status>Track Volume: 1.0 dB</Status>
            <Overview />
            <Chain><ChainName>Bronto Pad</ChainName>
              <svg viewBox="0 0 110 12" preserveAspectRatio="none"><path d="M0 0h110v12H0z" fill="#1b1b1b" /><path d="M1 1h10v10H1zM26 1h32v10H26zM80 1h8v10h-8z" fill="#a4a4a4" /><path d="M12 1h13v10H12zM90 1h10v10H90z" fill="#4a4f4c" /><path d="M31 6h16M60 6h18" stroke="#444" strokeWidth="2" /></svg>
            </Chain>
            <PlayRing s={12} />
          </Footer>
        </App_>
        <Watermark>音频应用</Watermark>
      </Page>
    </>
  );
}
